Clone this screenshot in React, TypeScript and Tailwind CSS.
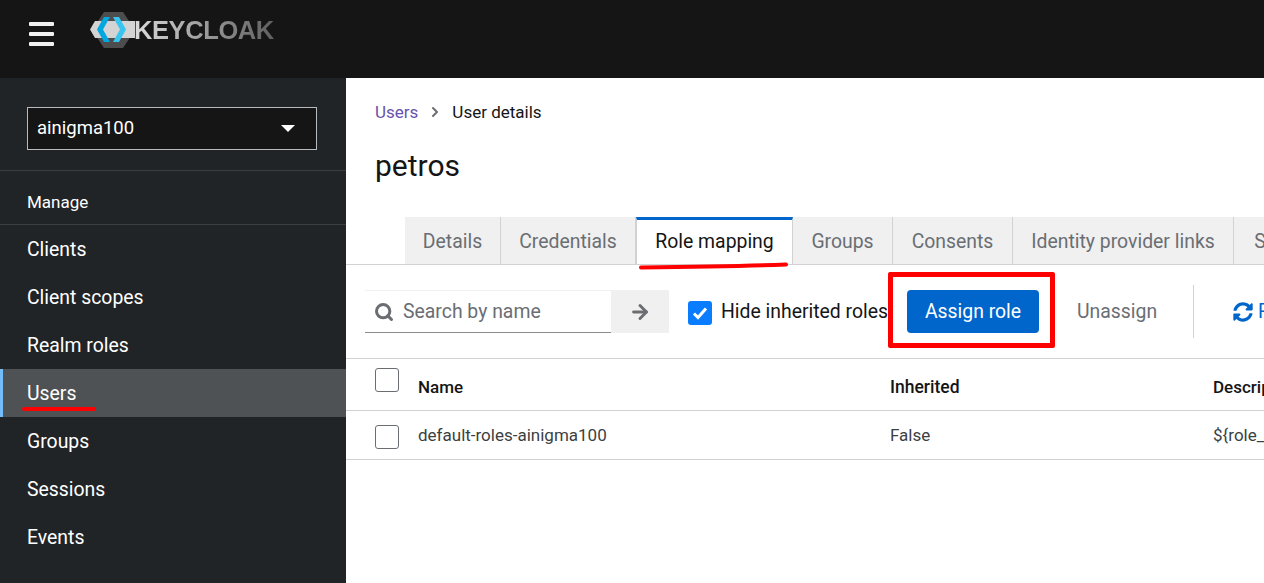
import { ArrowRight, ChevronRight, Search } from 'lucide-react';

const navItems = ['Clients', 'Client scopes', 'Realm roles', 'Users', 'Groups', 'Sessions', 'Events'];
const tabs = [
  { label: 'Details', width: 'w-[96px]' },
  { label: 'Credentials', width: 'w-[135px]' },
  { label: 'Role mapping', width: 'w-[157px]', active: true },
  { label: 'Groups', width: 'w-[100px]' },
  { label: 'Consents', width: 'w-[120px]' },
  { label: 'Identity provider links', width: 'w-[221px]' },
  { label: 'Sessions', width: 'w-[120px]' },
];

function Logo() {
  return (
    <div className="flex items-center">
      <svg width="52" height="38" viewBox="0 0 52 38" className="shrink-0">
        <polygon points="15,1 34,1 46,19 34,37 15,37 3,19" fill="#4d4d4d" />
        <polygon points="1,18.500 6,10 46,10 46,27 6,27" fill="#d4d4d4" />
        <polygon points="15,6 21,6 14,18.500 21,31 15,31 8,18.500" fill="#00a7e0" />
        <polygon points="30,6 24,6 31,18.500 24,31 30,31 37,18.500" fill="#38c6f0" />
      </svg>
      <span className="-ml-[7px] bg-gradient-to-r from-[#dcdcdc] to-[#606060] bg-clip-text font-['Liberation_Sans',sans-serif] text-[25.5px] font-bold tracking-[-0.4px] text-transparent">
        KEYCLOAK
      </span>
    </div>
  );
}

function Checkbox() {
  return <div className="h-6 w-6 shrink-0 rounded-[3px] border border-[#6a6e73] bg-white" />;
}

export default function App() {
  return (
    <div className="relative h-[583px] w-[1264px] overflow-hidden bg-white font-['Roboto',sans-serif] text-[19.400px] text-[#151515]">
      <header className="flex h-[78px] items-start bg-[#151515] pl-[29px] pt-[11px]">
        <div className="mt-[11px] flex w-[25px] flex-col gap-[6px]">
          <span className="h-[4px] rounded-[1px] bg-[#f0f0f0]" />
          <span className="h-[4px] rounded-[1px] bg-[#f0f0f0]" />
          <span className="h-[4px] rounded-[1px] bg-[#f0f0f0]" />
        </div>
        <div className="ml-[35px]">
          <Logo />
        </div>
      </header>

      <div className="flex h-[505px]">
        <aside className="w-[346px] shrink-0 bg-[#212427] text-white">
          <div className="border-b border-[#3c3f42] pb-[20px] pl-[27px] pr-[29px] pt-[29px]">
            <div className="flex h-[43px] items-center justify-between border border-[#b8bbbe] bg-[#151515] pl-[9px] pr-[21px]">
              <span className="text-[18.500px]">ainigma100</span>
              <span className="h-0 w-0 border-x-[7px] border-t-[7px] border-x-transparent border-t-white" />
            </div>
          </div>
          <div className="flex h-[54px] items-center border-b border-[#3c3f42] pl-[27px] pt-[10px] text-[17px]">Manage</div>
          <nav>
            {navItems.map((item) =>
              item === 'Users' ? (
                <div key={item} className="flex h-[48px] items-center border-l-[3px] border-[#73bcf7] bg-[#4f5255] pl-[24px] pt-[2px]">
                  {item}
                </div>
              ) : (
                <div key={item} className="flex h-[48px] items-center pl-[27px] pt-[2px]">
                  {item}
                </div>
              ),
            )}
          </nav>
        </aside>

        <main className="min-w-0 flex-1">
          <div className="flex items-center pl-[29px] pt-[22px] text-[17px] leading-[24px]">
            <span className="text-[#6753ac]">Users</span>
            <ChevronRight className="mx-[9px] h-[16px] w-[16px] text-[#6a6e73]" strokeWidth={3} />
            <span>User details</span>
          </div>
          <h1 className="pl-[29px] pt-[22px] text-[30px] leading-[40px]">petros</h1>

          <div className="mt-[31px] flex h-[48px] overflow-hidden border-b border-[#d2d2d2] pl-[59px]">
            {tabs.map((tab) =>
              tab.active ? (
                <div key={tab.label} className={`flex ${tab.width} shrink-0 justify-center border-x border-t-[3px] border-x-[#d2d2d2] border-t-[#06c] bg-white pt-[7px] leading-[30px]`}>
                  {tab.label}
                </div>
              ) : (
                <div key={tab.label} className={`flex ${tab.width} shrink-0 justify-center border-r border-[#d2d2d2] bg-[#f0f0f0] pt-[10px] leading-[30px] text-[#6a6e73]`}>
                  {tab.label}
                </div>
              ),
            )}
          </div>

          <div className="flex h-[94px] items-start border-b border-[#d2d2d2] pl-[19px] pt-[25px]">
            <div className="flex h-[43px] w-[246px] shrink-0 items-center border-b border-t border-[#8a8d90] border-t-[#f0f0f0] pl-[9px] text-[#6a6e73]">
              <Search className="h-[20px] w-[20px]" strokeWidth={3.6} />
              <span className="ml-[9px]">Search by name</span>
            </div>
            <div className="flex h-[43px] w-[58px] shrink-0 items-center justify-center bg-[#f0f0f0] text-[#6a6e73]">
              <ArrowRight className="h-[22px] w-[22px]" strokeWidth={3.2} />
            </div>
            <div className="ml-[19px] mt-[11px] flex h-[24px] w-[24px] shrink-0 items-center justify-center rounded-[3px] bg-[#0a7cff]">
              <svg width="16" height="14" viewBox="0 0 16 14">
                <path d="M2 7.5 L6 11.5 L14 2.5" fill="none" stroke="white" strokeWidth="3" />
              </svg>
            </div>
            <span className="ml-[9px] mt-[7px] w-[186px] shrink-0 leading-[30px]">Hide inherited roles</span>
            <div className="flex h-[43px] w-[132px] shrink-0 items-center justify-center rounded-[4px] bg-[#06c] text-white">Assign role</div>
            <span className="ml-[38px] mt-[7px] w-[78px] shrink-0 leading-[30px] text-[#6a6e73]">Unassign</span>
            <div className="-mt-[5px] ml-[38px] h-[53px] w-px shrink-0 bg-[#d2d2d2]" />
            <div className="ml-[39px] mt-[7px] flex shrink-0 items-center gap-[5px] leading-[30px] text-[#06c]">
              <svg width="20" height="20" viewBox="0 0 512 512" fill="#06c" className="shrink-0">
                <path d="M370.7 133.3C339.5 104 298.9 88 255.800 88c-77.500.1-144.300 53.200-162.800 126.900-1.300 5.400-6.100 9.100-11.600 9.100H24.100c-7.500 0-13.200-6.800-11.800-14.200C33.900 94.900 134.800 8 256 8c66.400 0 126.800 26.100 171.300 68.700L463 41c15.100-15.100 41-4.400 41 17v134c0 13.300-10.700 24-24 24H346c-21.400 0-32.100-25.900-17-41l41.700-41.700zM32 296h134c21.400 0 32.100 25.900 17 41l-41.700 41.700c31.200 29.300 71.800 45.300 114.900 45.300 77.400-.1 144.300-53.100 162.800-126.800 1.300-5.400 6.100-9.100 11.600-9.100h57.300c7.500 0 13.200 6.800 11.800 14.200C478.100 417.100 377.200 504 256 504c-66.400 0-126.800-26.100-171.300-68.700L49 471c-15.100 15.100-41 4.400-41-17V320c0-13.300 10.700-24 24-24z" />
              </svg>
              Refresh
            </div>
          </div>

          <div className="flex h-[52px] border-b border-[#d2d2d2] pl-[29px] pt-[9px]">
            <Checkbox />
            <span className="ml-[19px] mt-[6px] w-[472px] shrink-0 text-[17px] font-medium leading-[26px]">Name</span>
            <span className="mt-[6px] w-[323px] shrink-0 text-[17.500px] font-medium leading-[26px]">Inherited</span>
            <span className="mt-[6px] shrink-0 text-[17px] font-medium leading-[26px]">Description</span>
          </div>
          <div className="flex h-[49px] border-b border-[#d2d2d2] pl-[29px] pt-[14px]">
            <Checkbox />
            <span className="-mt-[3px] ml-[19px] w-[472px] shrink-0 text-[17px] leading-[26px] text-[#3c3f42]">default-roles-ainigma100</span>
            <span className="-mt-[3px] w-[323px] shrink-0 text-[17px] leading-[26px] text-[#3c3f42]">False</span>
            <span className="-mt-[3px] shrink-0 text-[17px] leading-[26px] text-[#3c3f42]">{'${role_default-roles}'}</span>
          </div>
        </main>
      </div>

      {/* hand drawn red annotations */}
      <div className="absolute left-[888px] top-[272px] h-[76px] w-[167px] rounded-[2px] border-[5px] border-[#ff0000]" />
      <div className="absolute left-[22px] top-[407px] h-[4px] w-[74px] rounded-full bg-[#ff0000]" />
      <svg className="absolute left-[636px] top-[258px]" width="156" height="14" viewBox="0 0 156 14">
        <path d="M5 9.500 C 50 9, 110 8, 150 6.500" fill="none" stroke="#ff0000" strokeWidth="4" strokeLinecap="round" />
      </svg>
    </div>
  );
}
